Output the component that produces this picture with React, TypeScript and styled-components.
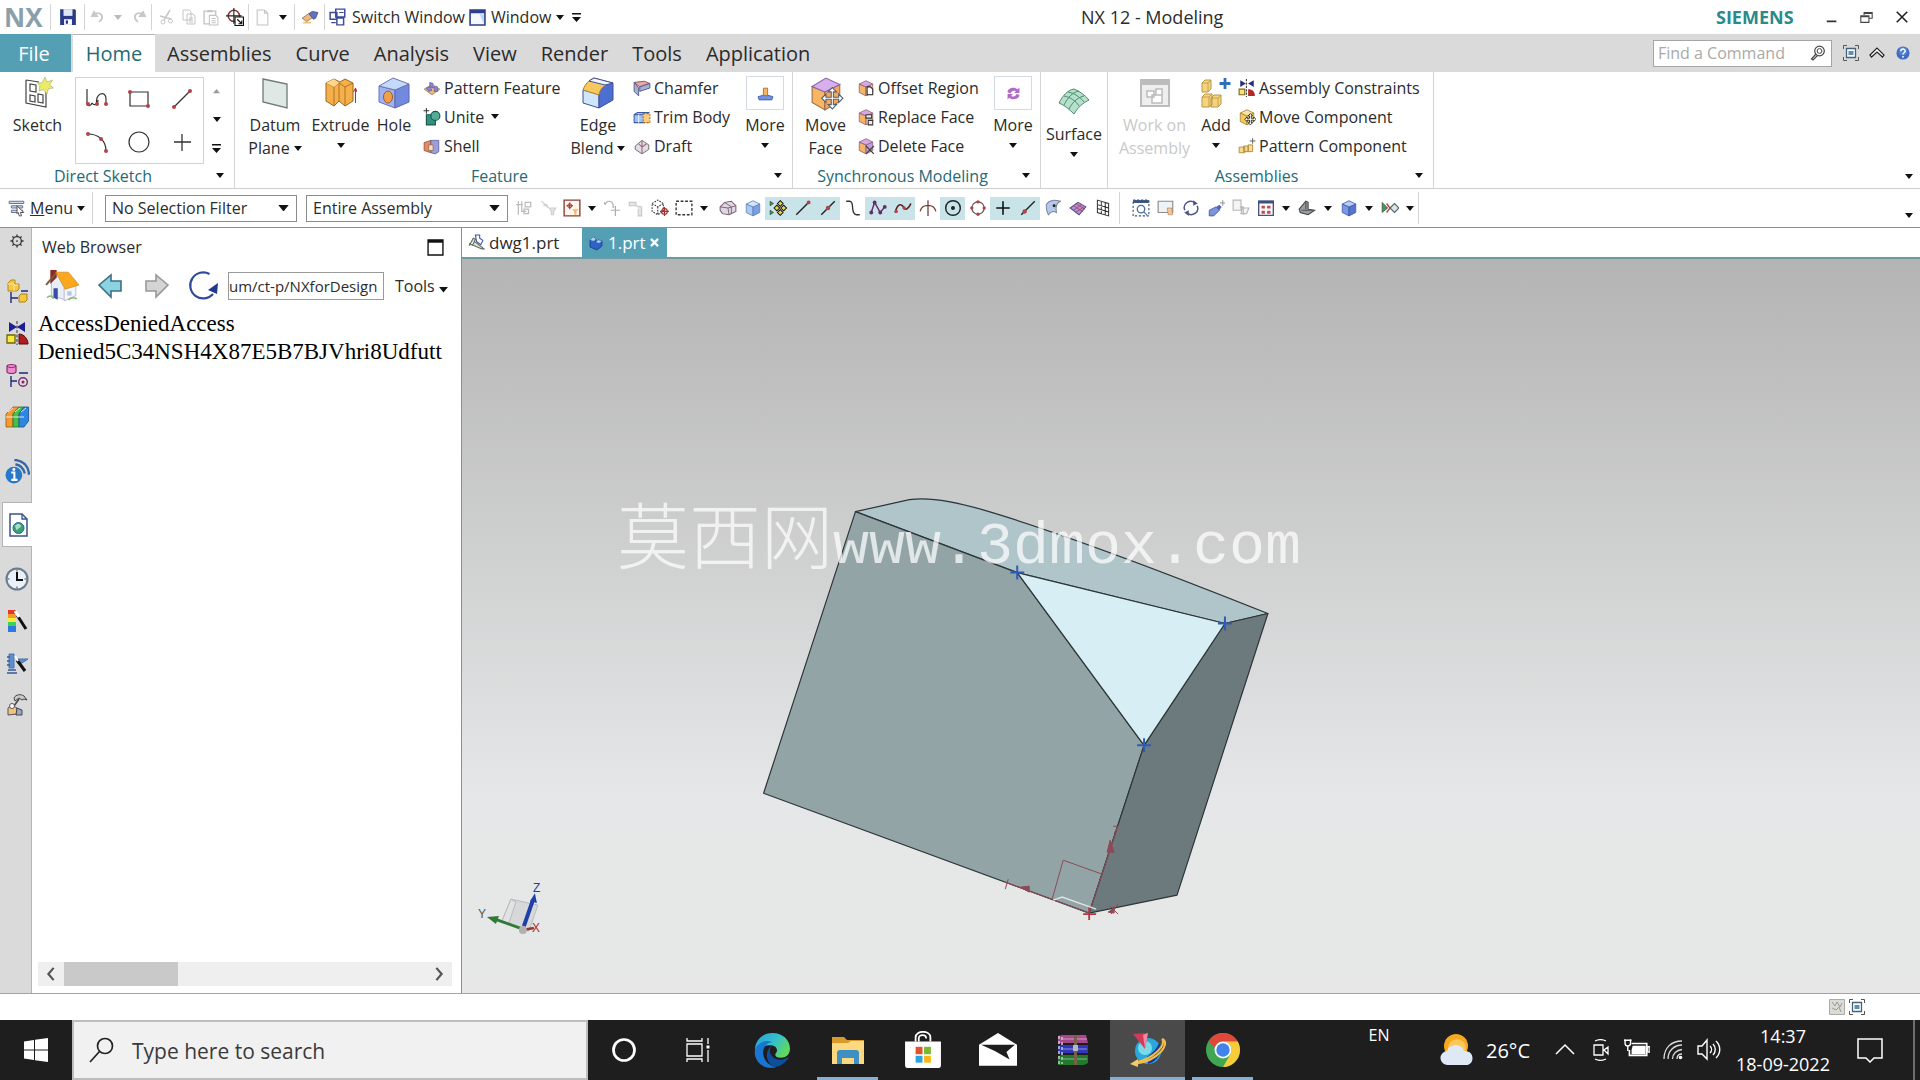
import React, { useEffect, useRef } from "react";
import styled, { createGlobalStyle, css } from "styled-components";

const C = {
  teal: "#559fb4",
  tealText: "#246a77",
  text: "#2b2b2b",
  bar: "#dadada",
  line: "#d4d4d4",
  hot: "#c9e4e8",
  task: "#1e1e1e",
};
const UI = `"Open Sans", "Noto Sans", sans-serif`;

const Global = createGlobalStyle`
  *, *::before, *::after { box-sizing: border-box; }
  html, body { margin: 0; height: 100%; }
  body { font-family: ${UI}; font-size: 16px; color: ${C.text}; background: #fff; overflow: hidden; }
  button, input, select { font: inherit; color: inherit; }
  h1, h2, p { margin: 0; font-weight: 400; }
  svg { display: block; flex: none; }
`;

const plain = css`
  border: 0;
  padding: 0;
  background: none;
  display: flex;
  align-items: center;
  justify-content: center;
  white-space: nowrap;
`;

/* ---------- shell ---------- */
const Shell = styled.div`
  height: 100vh;
  display: flex;
  flex-direction: column;
`;
const TitleBar = styled.header`
  flex: none;
  height: 34px;
  display: flex;
  align-items: center;
`;
const Brand = styled.span`
  width: 50px;
  padding-left: 4px;
  font-size: 26px;
  line-height: 34px;
  font-weight: 700;
  color: #8b9fab;
`;
const Quick = styled.div<{ $pad?: number }>`
  display: flex;
  align-items: center;
  height: 26px;
  padding: 0 ${(p) => p.$pad ?? 5}px;
  border-left: 1px solid ${C.line};
`;
const Cell = styled.button<{ $w?: number; $hot?: boolean }>`
  ${plain}
  width: ${(p) => p.$w ?? 23}px;
  height: 23px;
  flex: none;
  background: ${(p) => (p.$hot ? C.hot : "none")};
`;
const QuickText = styled.button`
  ${plain}
  gap: 5px;
  padding-left: 4px;
`;
const Title = styled.h1`
  flex: 1;
  text-align: center;
  font-size: 18px;
  line-height: 34px;
`;
const Siemens = styled.span`
  font-weight: 700;
  font-size: 18px;
  color: #2a8a8c;
  width: 98px;
`;

const TabBar = styled.nav`
  flex: none;
  height: 38px;
  display: flex;
  align-items: stretch;
  background: ${C.bar};
`;
const Tab = styled.button<{ $kind?: "file" | "on" }>`
  ${plain}
  font-size: 20px;
  padding: 0 12px;
  ${(p) => p.$kind === "file" && css`background: ${C.teal}; color: #fff; width: 71px; padding-right: 15px;`}
  ${(p) => p.$kind === "on" && css`background: #fff; color: ${C.tealText}; margin-left: 2px; width: 82px; border-top: 1px solid #b5b5b5;`}
`;
const TabTools = styled.div`
  display: flex;
  align-items: center;
  padding-right: 4px;
`;
const Spacer = styled.span`
  flex: 1;
`;
const Finder = styled.label`
  display: flex;
  align-items: center;
  align-self: center;
  width: 179px;
  height: 27px;
  padding: 0 5px 0 4px;
  margin-right: 6px;
  background: #fff;
  border: 1px solid #a5a5a5;
  input {
    flex: 1;
    min-width: 0;
    border: 0;
    padding: 0;
    outline: 0;
    background: none;
    &::placeholder { color: #a9a9a9; opacity: 1; }
  }
`;

/* ---------- ribbon ---------- */
const Ribbon = styled.section`
  flex: none;
  height: 117px;
  display: flex;
  border-bottom: 1px solid #cfcfcf;
`;
const GroupBox = styled.section<{ $w: number }>`
  width: ${(p) => p.$w}px;
  flex: none;
  display: flex;
  flex-direction: column;
  border-right: 1px solid ${C.line};
`;
const GroupBody = styled.div<{ $pad?: number }>`
  height: 92px;
  display: flex;
  padding-left: ${(p) => p.$pad ?? 3}px;
`;
const GroupFoot = styled.div`
  height: 24px;
  display: flex;
  h2 { flex: 1; text-align: center; font-size: 16px; line-height: 24px; color: ${C.tealText}; }
`;
const BigBtn = styled.button<{ $w: number; $drop?: number; $off?: boolean }>`
  ${plain}
  flex: none;
  flex-direction: column;
  justify-content: flex-start;
  width: ${(p) => p.$w}px;
  padding-top: ${(p) => 5 + (p.$drop ?? 0)}px;
  color: ${(p) => (p.$off ? "#c9c9c9" : C.text)};
`;
const BigIcon = styled.span<{ $box?: boolean }>`
  width: ${(p) => (p.$box ? 38 : 32)}px;
  height: ${(p) => (p.$box ? 34 : 32)}px;
  margin-bottom: ${(p) => (p.$box ? 4 : 5)}px;
  display: grid;
  place-items: center;
  border: ${(p) => (p.$box ? "1px solid #d5dbe6" : "0")};
`;
const BigLine = styled.span`
  height: 23px;
  line-height: 23px;
  display: flex;
  align-items: center;
  gap: 4px;
`;
const ArrowLine = styled.span`
  height: 16px;
  display: flex;
  align-items: center;
`;
const SmallCol = styled.div<{ $w?: number }>`
  width: ${(p) => (p.$w ? p.$w + "px" : "auto")};
  padding: 1px 0 0 4px;
`;
const SmallBtn = styled.button`
  ${plain}
  height: 29px;
  gap: 3px;
`;
const Gallery = styled.div`
  width: 129px;
  height: 87px;
  margin-top: 5px;
  display: grid;
  grid-template-columns: repeat(3, 1fr);
  border: 1px solid #cfd2d6;
`;
const GalleryCell = styled.button`
  ${plain}
`;
const GalleryNav = styled.div`
  width: 25px;
  padding-top: 5px;
  display: grid;
`;
const RibbonEnd = styled.div`
  margin-left: auto;
  align-self: flex-end;
`;

/* ---------- selection bar ---------- */
const SelBar = styled.section`
  flex: none;
  height: 39px;
  display: flex;
  align-items: center;
  border-bottom: 1px solid #8e8e8e;
`;
const MenuBtn = styled.button`
  ${plain}
  width: 93px;
  height: 32px;
  padding-right: 7px;
  gap: 4px;
  justify-content: flex-end;
  border-right: 1px solid ${C.line};
`;
const Combo = styled.label<{ $w: number; $gap: number }>`
  width: ${(p) => p.$w}px;
  height: 27px;
  margin-left: ${(p) => p.$gap}px;
  padding: 0 7px 0 6px;
  display: flex;
  align-items: center;
  border: 1px solid #8c8c8c;
  select {
    flex: 1;
    min-width: 0;
    appearance: none;
    border: 0;
    padding: 0;
    background: none;
    outline: 0;
  }
`;
const Tools = styled.div<{ $gap: number; $bar?: boolean }>`
  display: flex;
  align-items: center;
  height: 32px;
  margin-left: ${(p) => p.$gap}px;
  border-right: ${(p) => (p.$bar ? `1px solid ${C.line}` : "0")};
`;

/* ---------- body ---------- */
const Body = styled.main`
  flex: 1;
  min-height: 0;
  display: flex;
  border-bottom: 1px solid #a3a3a3;
`;
const Rail = styled.nav`
  flex: none;
  width: 32px;
  display: flex;
  flex-direction: column;
  background: ${C.bar};
  border-right: 1px solid #b4b4b4;
`;
const RailBtn = styled.button<{ $h?: number; $gap?: number; $on?: boolean }>`
  ${plain}
  flex: none;
  height: ${(p) => p.$h ?? 42}px;
  margin: ${(p) => p.$gap ?? 0}px -1px 0 ${(p) => (p.$on ? 2 : 0)}px;
  padding-left: ${(p) => (p.$on ? 0 : 2)}px;
  ${(p) => p.$on && css`background: #fff; border: 1px solid #b4b4b4; border-right: 0;`}
`;
const Panel = styled.aside`
  flex: none;
  width: 430px;
  display: flex;
  flex-direction: column;
  padding: 0 9px 7px 6px;
  border-right: 1px solid #8e8e8e;
`;
const PanelHead = styled.div`
  height: 38px;
  display: flex;
  align-items: center;
  justify-content: space-between;
  padding: 0 8px 0 4px;
  h2 { font-size: 16px; }
`;
const NavRow = styled.div`
  height: 40px;
  display: flex;
  align-items: center;
`;
const Url = styled.input`
  width: 156px;
  height: 28px;
  margin: 0 11px 0 2px;
  padding: 0 6px 0 0;
  font-size: 15px;
  border: 1px solid #9a9a9a;
  outline: 0;
`;
const LinkBtn = styled.button`
  ${plain}
  gap: 4px;
  svg { margin-top: 8px; }
`;
const Web = styled.div`
  flex: 1;
  overflow: hidden;
  padding-top: 4px;
  font-family: "Liberation Serif", serif;
  font-size: 23px;
  line-height: 28px;
  color: #000;
`;
const Scroll = styled.div`
  height: 24px;
  display: flex;
  background: #efefef;
`;
const Thumb = styled.div`
  width: 114px;
  background: #c9c9c9;
`;
const Stage = styled.section`
  flex: 1;
  min-width: 0;
  display: flex;
  flex-direction: column;
`;
const FileTabs = styled.div`
  flex: none;
  height: 31px;
  display: flex;
  border-bottom: 2px solid #6b9aa5;
`;
const FileTab = styled.button<{ $on?: boolean }>`
  ${plain}
  gap: 4px;
  padding: 0 6px;
  width: ${(p) => (p.$on ? 85 : 120)}px;
  font-size: 17px;
  justify-content: flex-start;
  background: ${(p) => (p.$on ? C.teal : "#fff")};
  color: ${(p) => (p.$on ? "#fff" : C.text)};
`;
const Canvas = styled.div`
  flex: 1;
  min-height: 0;
  position: relative;
  background: linear-gradient(#b4b4b4, #e6e7e8 74%, #e7e7e7);
  > svg { width: 100%; height: 100%; }
`;
const Watermark = styled.p`
  position: absolute;
  left: 155px;
  top: 31%;
  height: 90px;
  display: flex;
  align-items: baseline;
  white-space: nowrap;
  color: rgba(255, 255, 255, 0.72);
  font: 300 72px/90px "Noto Sans CJK SC", sans-serif;
  span { font: 400 60px/90px "Liberation Mono", monospace; }
`;
const Status = styled.footer`
  flex: none;
  height: 26px;
  display: flex;
  justify-content: flex-end;
  align-items: center;
  gap: 4px;
  padding-right: 55px;
`;

/* ---------- taskbar ---------- */
const TaskBar = styled.footer`
  flex: none;
  height: 60px;
  display: flex;
  background: ${C.task};
  color: #fff;
`;
const TaskBtn = styled.button<{ $w?: number; $on?: boolean }>`
  ${plain}
  flex: none;
  width: ${(p) => p.$w ?? 75}px;
  background: ${(p) => (p.$on ? "#4a4a4a" : "none")};
`;
const Running = styled.span<{ $wide?: boolean }>`
  display: flex;
  width: ${(p) => (p.$wide ? 75 : 61)}px;
  height: 60px;
  padding-top: 3px;
  align-items: center;
  justify-content: center;
  border-bottom: 3px solid #84b0d8;
`;
const SearchBox = styled.label`
  flex: none;
  width: 516px;
  display: flex;
  align-items: center;
  gap: 17px;
  padding-left: 15px;
  background: #f1f1f1;
  border: 2px solid #bdbdbd;
  input {
    flex: 1;
    border: 0;
    padding: 2px 0 0;
    background: none;
    outline: 0;
    font-size: 21px;
    &::placeholder { color: #3a3a3a; opacity: 1; }
  }
`;
const Tray = styled.div`
  margin-left: auto;
  display: flex;
  align-items: center;
`;
const TrayBtn = styled.button<{ $w: number }>`
  ${plain}
  width: ${(p) => p.$w}px;
  height: 60px;
`;
const Lang = styled.button`
  ${plain}
  font-size: 16px;
  width: 56px;
  height: 30px;
  align-self: flex-start;
`;
const Weather = styled.button`
  ${plain}
  gap: 12px;
  font-size: 20px;
  margin-left: 16px;
  width: 124px;
`;
const Clock = styled.button`
  ${plain}
  flex-direction: column;
  width: 112px;
  font-size: 18px;
  line-height: 28px;
`;
const Peek = styled.span`
  width: 7px;
  height: 60px;
  margin-left: 12px;
  border-left: 2px solid #6d6d6d;
`;

/* ---------- icons ---------- */
type IP = { s?: number; v?: number; children?: React.ReactNode };
const I = ({ s = 18, v = 16, children }: IP) => (
  <svg width={s} height={s} viewBox={`0 0 ${v} ${v}`} fill="none" aria-hidden="true">{children}</svg>
);
const Down = ({ c = "#111", w = 8 }: { c?: string; w?: number }) => (
  <svg width={w} height={w / 2 + 1} viewBox="0 0 8 5" aria-hidden="true"><path d="M0 0h8L4 5z" fill={c} /></svg>
);
const More = () => (
  <svg width="9" height="9" viewBox="0 0 9 9" aria-hidden="true"><path d="M0 0h9v1.4H0zM0 4h9L4.500 9z" fill="#111" /></svg>
);
const cube = (a: string, b: string, c: string, st = "#555") => (
  <g stroke={st} strokeWidth=".7" strokeLinejoin="round">
    <path d="M2 4.500 8 7v8L2 12z" fill={b} /><path d="M14 4.500 8 7v8l6-3z" fill={c} /><path d="M2 4.500 8 1.500l6 3L8 7z" fill={a} />
  </g>
);
const dot = (x: number, y: number, r = 1.5, c = "#b0444a") => <circle cx={x} cy={y} r={r} fill={c} />;

const ic: Record<string, React.ReactNode> = {
  save: <I><path d="M1 1h13l1 1v13H1z" fill="#2b3a86" /><path d="M4 1h8v6H4z" fill="#dfe6f5" /><path d="M4.500 10h7v5h-7z" fill="#fff" /><path d="M6 11h2v3H6z" fill="#2b3a86" /></I>,
  undo: <I s={16}><path d="M2 7h5L4 3zM4 6c4-4 9-1 8 3-.4 2-2 3-3 4" stroke="#c8c8c8" strokeWidth="1.800" /></I>,
  redo: <I s={16}><path d="M14 7H9l3-4zM12 6C8 2 3 5 4 9c.4 2 2 3 3 4" stroke="#c8c8c8" strokeWidth="1.800" /></I>,
  cut: <I s={16}><path d="M12 1 6 11M2 7l11 3" stroke="#c8c8c8" strokeWidth="1.500" /><circle cx="5" cy="13" r="2" stroke="#c8c8c8" /><circle cx="12.500" cy="12" r="2" stroke="#c8c8c8" /></I>,
  copy: <I s={16}><path d="M2 1h6l2 2v8H2zM6 5h6l2 2v8H6z" fill="#fff" stroke="#c4c4c4" /><path d="M8 9h4M8 11h4M8 13h4" stroke="#c4c4c4" /></I>,
  paste: <I s={17}><path d="M1 2h11v12H1z" stroke="#c4c4c4" strokeWidth="1.300" /><path d="M4 1h5v2H4z" fill="#c4c4c4" /><path d="M6 6h6l2 2v7H6z" fill="#fff" stroke="#c4c4c4" /><path d="M8 9h4M8 11h4M8 13h4" stroke="#c4c4c4" /></I>,
  target: <I><circle cx="7" cy="7" r="5" stroke="#7c3030" strokeWidth="1.300" /><path d="M7 0v14M0 7h14" stroke="#222" /><path d="M8 8h7.500v7.500H8z" fill="#fff" stroke="#111" /><path d="m10 10 4 4m0-3v3h-3" stroke="#111" /></I>,
  page: <I s={17}><path d="M3 1h7l3 3v11H3z" fill="#fdfdfd" stroke="#c2c2c2" /><path d="M10 1v3h3" stroke="#c2c2c2" /></I>,
  eraser: <I><path d="m1 9 6-4 4 3-6 4z" fill="#f0b880" stroke="#8a6a4a" strokeWidth=".7" /><path d="m7 5 3-2 5 1-2 5-2 1z" fill="#6672b8" stroke="#3c4688" strokeWidth=".7" /><path d="m2 13 7 0" stroke="#e0c27c" strokeWidth="1.500" /></I>,
  switch: <I><path d="M6 1h8v7H6zM1 4h6v6H1zM7 9h6v6H7z" stroke="#3c4a98" strokeWidth="1.300" fill="#fff" /><path d="M2 13h4M9 4h4" stroke="#3c4a98" /></I>,
  window: <I s={17}><path d="M1 1h14v14H1z" fill="#f4f9ff" stroke="#2d3f8c" strokeWidth="1.500" /><path d="M1 1h14v3H1z" fill="#2d3f8c" /><path d="M10 5h4v9z" fill="#b8d8f4" /></I>,
  min: <I s={14}><path d="M2 13h11" stroke="#333" strokeWidth="2" /></I>,
  restore: <I s={13}><path d="M5 5V2h10v7h-4M1 6h10v8H1z" stroke="#444" strokeWidth="1.300" /><path d="M1 7h10M5 3h10" stroke="#444" strokeWidth="1.500" /></I>,
  close: <I s={14}><path d="m2 2 12 12M14 2 2 14" stroke="#222" strokeWidth="1.800" /></I>,
  find: <I s={16}><circle cx="9.500" cy="6" r="4.800" stroke="#444" strokeWidth="1.200" /><circle cx="9.500" cy="6" r="2.400" stroke="#444" /><path d="m6 9-4.500 5 1.500 1 4.500-4.500" stroke="#444" strokeWidth="1.200" /></I>,
  full: <I s={16}><path d="M.5 4V.5H4M12 .5h3.500V4M15.500 12v3.500H12M4 15.500H.5V12" stroke="#555" /><path d="M3.500 3.500h9v9h-9z" fill="#fff" stroke="#44627c" strokeWidth="1.300" /><path d="M5.500 6h5v4h-5z" fill="#5b8fb5" /></I>,
  up: <I s={16}><path d="m1 10 7-7 7 7-1.500 2L8 7 2.500 12z" stroke="#222" strokeWidth="1.200" fill="#fff" /></I>,
  help: <I s={14}><circle cx="8" cy="8" r="7.500" fill="#3e6cc0" /><circle cx="8" cy="6" r="5" fill="#6f98dc" opacity=".5" /><path d="M5.500 6c0-3.400 5-3.200 5-.3 0 2-2.500 2-2.500 4" stroke="#fff" strokeWidth="1.700" /><circle cx="8" cy="12.400" r="1.100" fill="#fff" /></I>,

  sketch: <I s={32} v={32}><path d="M4 3v23l20 4V13M4 3l13 2" stroke="#444" strokeWidth="1.200" /><path d="M8 7v7l6 1V8zM8 18v6l5 1v-6zM16 17v8l5 1v-8z" stroke="#444" strokeWidth="1.200" /><path d="m23 0 2 5 5.500-2-3 5 4 3-5 .5L25 17l-3.500-4.500L17 14l1-5-3-3.500 5 .5z" fill="#ecec6a" stroke="#a5a95c" strokeWidth=".6" /></I>,
  profile: <I s={24} v={24}><path d="M2 2v14c1 4 4 3 5 0M12 17c-3-10 9-15 9-5v5M7 16c2 3 6 2 6-3" stroke="#333" strokeWidth="1.200" />{dot(3, 17, 2)}{dot(12, 17, 2)}{dot(21, 17, 2)}</I>,
  rect: <I s={24} v={24}><path d="M3 5h18v14H3z" stroke="#333" strokeWidth="1.200" />{dot(3, 5, 2)}{dot(21, 19, 2)}</I>,
  line: <I s={24} v={24}><path d="M4 20 20 4" stroke="#333" strokeWidth="1.200" />{dot(4, 20, 2)}{dot(20, 4, 2)}</I>,
  arc: <I s={24} v={24}><path d="M3 4c10 0 18 6 18 17" stroke="#333" strokeWidth="1.200" />{dot(3, 4, 2)}{dot(16, 9, 2)}{dot(21, 21, 2)}</I>,
  circle: <I s={24} v={24}><circle cx="12" cy="12" r="10" stroke="#333" strokeWidth="1.200" /></I>,
  plus: <I s={24} v={24}><path d="M12 4v17M4 12h17" stroke="#333" strokeWidth="1.300" /></I>,
  datum: <I s={32} v={32}><path d="m4 2 24 5v24L4 25z" fill="#dfe8e5" stroke="#6d7a78" strokeWidth="1.300" /></I>,
  extrude: <I s={32} v={32}><path d="m1 6 8-4 6 3 5-3 8 4v18l-8 5-6-5-5 5-8-5z" fill="#f5b04a" stroke="#9a661e" /><path d="m1 6 8 4 5-4 6 4 8-4M9 10v19M14 6v18M20 10v19" stroke="#9a661e" strokeWidth=".8" /><path d="m1 6 8-4 5 4-5 4z" fill="#ffd68a" /><path d="M30.500 12v14m-2-11 2-4 1.500 4" stroke="#a33" /></I>,
  hole: <I s={32} v={32}><path d="M1 9v16l16 6V13z" fill="#9db2f2" stroke="#6a74b4" /><path d="m31 7-14 6v18l14-6z" fill="#7289e0" stroke="#5a66a8" /><path d="m1 9 14-8 16 6-14 6z" fill="#c3dafa" stroke="#6a74b4" /><ellipse cx="10" cy="20" rx="4.500" ry="6" fill="#f0a04a" stroke="#a05a2a" /></I>,
  pattern: <I><path d="m1 9 5-3 9 3-7 5z" fill="#f0b878" stroke="#9a7a50" strokeWidth=".7" /><path d="m6 3 3 1v4l-3-1zM3 8l3-1 2 3-3 1zM10 6l3 1v4h-3z" fill="#8b86cf" stroke="#5c5796" strokeWidth=".6" /></I>,
  unite: <I><path d="M3 6h8v9H3z" fill="#34917e" stroke="#17594c" /><circle cx="11" cy="7" r="4" fill="#54ab98" stroke="#17594c" /><path d="M3 0v5M.5 2.500h5" stroke="#333" strokeWidth=".9" /></I>,
  shell: <I><path d="m1 5 6-2v11l-6-2z" fill="#e88a5a" stroke="#8a4a3a" strokeWidth=".7" /><path d="M7 3h7v10l-3 2-4-1z" fill="#9a9fdc" stroke="#565c9c" strokeWidth=".7" /><path d="M5 7h4v5H5z" fill="#f7ddc4" stroke="#8a5a4a" strokeWidth=".6" /></I>,
  edge: <I s={32} v={32}><path d="M1 13v13l16 5V17z" fill="#cfe5f8" stroke="#3d4ea0" /><path d="M31 6c-8 1-13 5-14 11v14l14-8z" fill="#4c6fd0" stroke="#3d4ea0" /><path d="M1 13C3 7 7 3 12 1l19 5c-8 1-13 5-14 12z" fill="#f8c860" stroke="#a8802c" /><path d="m12 1 19 5-8 2L7 4z" fill="#f2f6ff" stroke="#3d4ea0" /></I>,
  chamfer: <I><path d="m1 3 9-1 5 2-9 3z" fill="#e9a6a6" stroke="#874c54" strokeWidth=".8" /><path d="M1 3v8l4 4V8zM6 7l9-3v4l-9 3z" fill="#a8b0d0" stroke="#4d5688" strokeWidth=".8" /></I>,
  trim: <I><path d="M1 6h9v7H1zM1 6l3-2h10l-2 2" fill="#9cc3f2" stroke="#3a5aa2" strokeWidth=".9" /><path d="M9 5h6v8H9z" fill="#fbcf7a" stroke="#b5661f" strokeWidth=".9" strokeDasharray="2 1" /><path d="M5 6v7" stroke="#e8f0ff" /></I>,
  draft: <I><path d="m2 8 6-5 6 4v4l-6 4-6-4z" fill="#dcdfe8" stroke="#666" strokeWidth=".8" /><path d="M8 3v12M5 6l3 3 4-3" stroke="#a8596a" strokeWidth=".9" /></I>,
  moreF: <I s={17}><path d="m1 11 7-2 7 2-1 3H2z" fill="#6e92e4" stroke="#3c58a8" strokeWidth=".8" /><path d="M6 3h4v7H6z" fill="#f5b665" stroke="#a46c25" strokeWidth=".8" /></I>,
  moreS: <I s={19}><path d="M3 7c0-4 6-5 8.500-2.500L13 3v4.500H8.500L10 6C8 5 6 6 5.500 8zM13 9c0 4-6 5-8.500 2.500L3 13V8.500h4.500L6 10c2 1.200 4 .5 4.500-1.500z" fill="#b06cc4" /></I>,
  moveFace: <I s={34} v={32}><path d="M2 9v15l12 7V14z" fill="#f8b660" stroke="#9a6a4a" /><path d="m28 7-14 7v17l14-8z" fill="#f5a75e" stroke="#9a6a4a" /><path d="m2 9 13-8 13 6-14 7z" fill="#d9aeec" stroke="#8a66aa" /><path d="m21 10 4 4h-3v5h5v-3l4 4-4 4v-3h-5v5h3l-4 4-4-4h3v-5h-5v3l-4-4 4-4v3h5v-5h-3z" fill="#fff" stroke="#4f6276" /></I>,
  offset: <I>{cube("#d7a8e8", "#f5b468", "#f8cf98", "#8a6072")}<path d="M9 7h3l2 2v5H9z" fill="#fff" stroke="#222" strokeWidth=".9" /></I>,
  replace: <I>{cube("#d7a8e8", "#f5b468", "#f8cf98", "#8a6072")}<path d="M8 6h5v3H8zM10 11h4v4h-4z" fill="#eee" stroke="#333" strokeWidth=".9" /></I>,
  del: <I>{cube("#d7a8e8", "#f5b468", "#c79ce0", "#8a6072")}<path d="m8 8 7 7m0-7-7 7" stroke="#444" strokeWidth="1.200" /></I>,
  surface: <I s={32} v={32}><path d="M1 17C5 9 10 4 16 3c5 2 11 6 15 11-6 3-11 7-15 14C11 23 6 19 1 17z" fill="#b5e0ca" stroke="#4f8a72" /><path d="M6 19c4-8 9-13 15-14M11 23c4-8 10-12 15-13M6 10c6 1 12 5 15 10M10 6c6 1 12 5 16 10" stroke="#4f8a72" /></I>,
  work: <I s={32} v={32}><path d="M2 3h28v26H2z" fill="#eee" stroke="#bcbcbc" strokeWidth="2" /><path d="M2 3h28v5H2z" fill="#bcbcbc" /><path d="M8 14h7v6H8zM13 18h10v8H13zM17 12h6v6h-6z" fill="#fff" stroke="#bcbcbc" strokeWidth="1.500" /></I>,
  add: <I s={32} v={32}><path d="m2 6 3-3h6v9l-3 3H2zM2 20l3-3h7v11l-3 2H2zM11 21l3-3h7v9l-3 3h-7z" fill="#f6d47c" stroke="#b8964a" /><path d="M2 6h6v8M8 6l3-3M2 20h7v10M9 20l3-3M11 21h7v8m0-8 3-3" stroke="#b8964a" strokeWidth=".8" /><path d="M25 1v11M19.500 6.500h11" stroke="#2c70b8" strokeWidth="2.800" /></I>,
  constr: <I><path d="m2 1 5 3-5 3zM14 1 9 4l5 3z" fill="#2d2d80" /><path d="M1 9h5v5H1z" fill="#f5e27a" stroke="#7a6a20" /><path d="M9 9v6h6c0-4-2-6-6-6z" fill="#b02a2a" /><path d="M7.500 0v16" stroke="#444" strokeDasharray="2 1" /></I>,
  moveC: <I>{cube("#fae3a0", "#f4c95c", "#f6d47c", "#a08030")}<path d="m11 5 2 2h-1.200v2.200H14V8l2 2-2 2v-1.200h-2.200V13H13l-2 2-2-2h1.200v-2.200H8V12l-2-2 2-2v1.200h2.200V7H9z" stroke="#111" strokeWidth=".7" fill="#fff" /></I>,
  patC: <I><path d="M1 9h5v5H1zM5 8h4v5H5zM9 7h4v6H9z" fill="#f8dc92" stroke="#b08a35" strokeWidth=".8" /><path d="M13 1v5M10.500 3.500h5" stroke="#555" strokeWidth=".8" /></I>,

  menu: <I><path d="M1 2h13v2H1zM3 6h10v2H3zM3 10h10v2H3z" fill="#cfd8ee" stroke="#5b678c" strokeWidth=".8" /><path d="m8 6 6 6-3 0 1 3-2 0-1-3-1 1z" fill="#fff" stroke="#444" strokeWidth=".8" /></I>,
  g1: <I><path d="M3 2v12M1 5h6M6 2v9h4M9 3h5v4H9zM8 9h4v4H8z" stroke="#bcbcbc" strokeWidth="1.100" /></I>,
  g2: <I><path d="m2 2 5 4M4 6c2-3 4 0 4 2M9 8h6l-2 3v3h-2v-3z" stroke="#d0d0d0" fill="#e2e2e2" /></I>,
  filt: <I><path d="M1 1h14v14H1z" fill="#fff6ee" stroke="#8c3a34" strokeWidth="1.200" /><path d="M6 3v6M3 6h6" stroke="#a3302a" /><circle cx="6" cy="6" r="1.800" stroke="#a3302a" strokeWidth=".8" /><path d="M8 9h6l-2 2v3h-2v-3z" fill="#f2b968" /></I>,
  g3: <I><path d="M2 5c1-4 6-4 7 0v3M2 5l-1-2M11 6v9M7 10h8" stroke="#adadad" strokeWidth="1.100" /></I>,
  g4: <I><path d="M2 3h6v3H2zM8 6l5 1v8h-3V9" stroke="#c8c8c8" fill="#e6e6e6" /></I>,
  dotcube: <I><path d="m1 4 5-3 5 3v7l-5 3-5-3zM1 4l5 3 5-3M6 7v7" stroke="#444" strokeDasharray="1.500 1" /><circle cx="12" cy="11" r="2.500" stroke="#a3302a" /><path d="M12 7v8M8 11h8" stroke="#a3302a" /></I>,
  marquee: <I><path d="M1 2h14v12H1z" stroke="#333" strokeDasharray="2.500 1.500" strokeWidth="1.200" /></I>,
  meshcube: <I><path d="m1 7 4-4 6-1 4 4v5l-6 3-6-1-2-3z" fill="#dcd8e4" stroke="#7d5a70" strokeWidth=".9" /><path d="M1 7l7 1 7-2M8 8l1 6M5 3l6 4v6" stroke="#7d5a70" strokeWidth=".8" /></I>,
  solid: <I>{cube("#d2e6fa", "#a9caf3", "#7ba0e2", "#5d7cb8")}</I>,
  snap: <I><path d="m1 2 3 2-3 2zM1 10l3 2-3 2z" fill="#39a05a" stroke="#222" strokeWidth=".5" />{[[10, 4], [7, 8], [13, 8], [10, 12]].map(([x, y]) => <path key={`${x}${y}`} d={`M${x} ${y - 2.5}l2.500 2.500-2.500 2.500-2.500-2.500z`} fill="#f0d24a" stroke="#111" strokeWidth=".9" />)}</I>,
  end: <I><path d="M2 14 14 2" stroke="#222" strokeWidth="1.200" />{dot(13, 3, 1.7)}</I>,
  mid: <I><path d="M2 14 14 2" stroke="#222" strokeWidth="1.200" />{dot(8, 8, 2)}</I>,
  onCurve: <I><path d="M2 14 14 2" stroke="#222" strokeWidth="1.200" />{dot(5, 11, 2)}</I>,
  curve: <I><path d="M2 2h3c5 0 0 11 6 12h3" stroke="#333" strokeWidth="1.200" /></I>,
  pole: <I><path d="m2 12 3-9 5 9 4-5" stroke="#642a6a" strokeWidth="1.300" />{dot(2, 12, 1.7, "#642a6a")}{dot(5, 3, 1.7, "#642a6a")}{dot(10, 12, 1.7, "#642a6a")}{dot(14, 7, 1.7, "#642a6a")}</I>,
  spline: <I><path d="M1 12C4 1 8 6 9 8s4 1 6-4" stroke="#5a2028" strokeWidth="1.500" />{dot(2, 11)}{dot(9, 8)}</I>,
  inter: <I><path d="M8 1v14M1 11c2-7 12-7 14 0" stroke="#743838" strokeWidth="1.100" /></I>,
  center: <I><circle cx="8" cy="8" r="6.500" stroke="#222" strokeWidth="1.300" />{dot(8, 8, 1.8, "#222")}</I>,
  quad: <I><circle cx="8" cy="8" r="5.500" stroke="#555" />{dot(8, 2.5)}{dot(8, 13.5)}{dot(2.5, 8)}{dot(13.5, 8)}</I>,
  cross: <I><path d="M8 2v12M2 8h12" stroke="#111" strokeWidth="1.400" /></I>,
  face: <I><path d="M2 5c3-5 8-4 13-3-4 1-5 4-4 10-3-2-5-1-7 2-2-3-2-6-2-9z" fill="#b4c8ea" stroke="#7985a0" strokeWidth=".9" />{dot(9, 6, 1.3, "#222")}</I>,
  grid1: <I><path d="m1 8 7-5 7 4-6 7z" fill="#a896d8" stroke="#5c4a96" strokeWidth=".9" /><path d="m4 6 8 5M6 4l8 5M4 10l7-5M6 12l7-5" stroke="#b03a4a" strokeWidth=".7" /></I>,
  grid2: <I><path d="m3 1 10 3v11L3 12zM3 5l10 3M3 8.500l10 3M6.500 2v11M10 3v11" stroke="#333" strokeWidth=".9" /></I>,
  fit: <I><path d="M1 1h14v14H1z" stroke="#44547e" strokeDasharray="2 1.500" /><path d="M1 1h14v2.500H1z" fill="#34507e" /><circle cx="8" cy="9" r="3.300" stroke="#4c6f9e" strokeWidth="1.200" /><path d="m10.500 11.500 3 3" stroke="#4c6f9e" /></I>,
  zoomw: <I><path d="M1 2h13v10H1z" stroke="#888" fill="#eef3f7" /><path d="M9 8h4l1 6h-4z" fill="#f4c49a" stroke="#b38660" strokeWidth=".6" /></I>,
  rotate: <I><path d="M2.500 10C0 4 7 0 11.500 3.500M13.500 6C16 12 9 16 4.500 12.500" stroke="#4e5684" strokeWidth="1.300" /><path d="m10 1 4 3-4 2zM6 15l-4-3 4-2z" fill="#4e5684" /></I>,
  paint: <I><path d="m2 10 6-3 3 3-5 5H2z" fill="#7d94da" stroke="#4d5aa0" strokeWidth=".8" /><path d="m8 7 3-2 2 2-2 3z" fill="#5a62c0" /><path d="M14 1v5M11.500 3.500h5" stroke="#888" strokeWidth=".8" /></I>,
  pages: <I><path d="M1 1h7v9H1zM7 7h3v7M9 8h6l-2 5H8z" stroke="#b7b7b7" fill="#f4f4f4" /></I>,
  layout: <I><path d="M1.500 2h13v12.500h-13z" fill="#fff" stroke="#4b4f80" strokeWidth="1.200" /><path d="M1 1.500h14V4H1z" fill="#3b4f80" /><path d="M4 6h3v2.500H4zM9 6h3v2.500H9zM4 10.500h3V13H4zM9 10.500h3V13H9z" fill="#c84848" /></I>,
  shade: <I><path d="m1 9 6-7 2 1v6l6 1-6 4-7-2z" fill="#9a9da0" stroke="#3d4144" strokeWidth=".9" /><path d="m3 10 10 0M7 3v6" stroke="#555" /></I>,
  bluecube: <I>{cube("#b4cdf8", "#7699e8", "#5474cf", "#3c55a0")}</I>,
  clip: <I><path d="m1 3 5 5-5 4z" fill="#3f9a55" stroke="#444" strokeWidth=".6" /><path d="m5 4 3 4-3 4" stroke="#c23b3b" strokeWidth="1.200" /><path d="m8 8 4-4 4 4-4 4z" fill="#dce3ea" stroke="#566" /></I>,

  gear: <I s={14}><circle cx="8" cy="8" r="5" stroke="#333" strokeWidth="1.500" />{dot(8, 8, 1, "#333")}<path d="M8 .5v2.500M8 13v2.500M.5 8H3M13 8h2.500M2.700 2.700l1.700 1.700M11.600 11.600l1.700 1.700M13.300 2.700l-1.700 1.700M4.400 11.600l-1.700 1.700" stroke="#333" strokeWidth="1.500" /></I>,
  asmNav: <I s={24} v={24}><path d="m3 4 3-3h4v4h4v5l-2 2H3z" fill="#f7c73c" stroke="#b08a2c" /><path d="M3 5h6v7M9 6h4" stroke="#fbe8a0" /><path d="M16 12h7M6 13v11M6 19h7" stroke="#1e2a7c" strokeWidth="1.400" /><path d="m14 17 2-2h6v6l-2 2h-6z" fill="#f7c73c" stroke="#a8811c" /></I>,
  conNav: <I s={24} v={24}><path d="m4 1 8 5-8 5zM20 1l-8 5 8 5z" fill="#1e1e96" /><path d="M2 14h8v8H2z" fill="#f8ea3a" stroke="#6d6412" strokeWidth="1.300" /><path d="M14 13v10h9c0-5-4-10-9-10z" fill="#b21d1d" stroke="#4a0f0f" /><path d="M12 0v24" stroke="#333" strokeDasharray="3 1.500" /></I>,
  partNav: <I s={24} v={24}><path d="M2 3c1-2 8-2 9 0v6c-1 2-8 2-9 0z" fill="#ee8cd0" stroke="#8c2a6a" strokeWidth="1.200" /><path d="M2 3c1 2 8 2 9 0" stroke="#8c2a6a" /><path d="M14 10h9M6 13v11M6 18h6" stroke="#1e2a7c" strokeWidth="1.400" /><circle cx="18" cy="19" r="4.300" stroke="#7c2a6a" strokeWidth="1.400" />{dot(18, 19, 1.5, "#7c2a6a")}</I>,
  books: <I s={24} v={24}><path d="m1 9 7-7h6l-6 7v13H1z" fill="#f49a30" stroke="#9a5a14" strokeWidth=".8" /><path d="m8 9 6-7h5l-5 7v13H8z" fill="#42c04a" stroke="#1f7a2a" strokeWidth=".8" /><path d="m14 9 5-7h4.500v14L19 22h-5z" fill="#2f86e0" stroke="#1a4c96" strokeWidth=".8" /><path d="m3 7 5-4M10 7l5-4M16 7l5-4M1 12h18" stroke="#fff" opacity=".8" /></I>,
  info: <I s={25} v={24}><circle cx="8.500" cy="15.500" r="8" fill="#2878c8" /><path d="M6 13h3v7M6 20h6" stroke="#fff" strokeWidth="2" />{dot(8.5, 10, 1.4, "#fff")}<path d="M9 1c8 0 14 6 14 14M10 5c5 1 8 4 9 9" stroke="#3368a8" strokeWidth="2.300" /></I>,
  web: <I s={24} v={24}><path d="M4 1h12l5 5v17H4z" fill="#fff" stroke="#3a5488" strokeWidth="1.500" /><path d="M16 1v5h5" stroke="#3a5488" strokeWidth="1.300" /><circle cx="12.500" cy="15" r="5.500" fill="#3aa07a" stroke="#286a88" /><path d="M9 13c2-3 6-2 6 0s-4 2-4 5" fill="#a6e0c8" /></I>,
  history: <I s={24} v={24}><circle cx="12" cy="12" r="10.500" fill="#e9f0f8" stroke="#6b7a8c" strokeWidth="2" /><path d="M12 5v8h6" stroke="#111" strokeWidth="2" /><path d="M12 2.500v2M12 19.500v2M2.500 12h2M19.500 12h2" stroke="#444" /></I>,
  rainbow: <I s={24} v={24}><path d="M3 1h8v4H3z" fill="#e23a2a" /><path d="M3 5h8v4H3z" fill="#f59a2a" /><path d="M3 9h8v4H3z" fill="#f2ee3a" /><path d="M3 13h8v4H3z" fill="#3fd05a" /><path d="M3 17h8v6H3z" fill="#2a7ae2" /><path d="m12 6 9 14" stroke="#111" strokeWidth="3" /><path d="m10 2 4 6" stroke="#fff" strokeWidth="3" /></I>,
  process: <I s={24} v={24}><path d="M4 3h5v14H4zM11 8h12l-6 4h-5" fill="#5d8fd0" stroke="#4a74ac" /><path d="M2 6h3M2 10h3M2 14h3M3 19h8M2 22h10" stroke="#335c96" strokeWidth="1.500" /><path d="m12 9 8 11" stroke="#111" strokeWidth="3" /><path d="m10 5 3 5" stroke="#fff" strokeWidth="2" /></I>,
  roles: <I s={24} v={24}><path d="M9 5c2-4 7-4 10-2l3 4-3-1-2 1-3-2-4 3z" fill="#c8cacc" stroke="#444" /><path d="m14 6-5 7" stroke="#444" strokeWidth="1.500" /><path d="m3 15 4-3 5 3v6l-9 1z" fill="#f1c27c" stroke="#555" /><circle cx="7" cy="13" r="2.500" fill="#fff" stroke="#555" /><path d="m12 15 5 2v5h-6z" fill="#9ea6c8" stroke="#444" /></I>,

  max: <I s={17}><path d="M1 1h14v14H1z" stroke="#111" strokeWidth="1.300" /><path d="M1 1h14v2.500H1z" fill="#111" /></I>,
  home: <I s={34} v={32}><path d="m6 12 6-7 7 14v10l-13-4z" fill="#e8edf8" stroke="#a4abc0" strokeWidth=".7" /><path d="m18 18 11-4v11l-11 5z" fill="#f4f6fa" stroke="#aab" strokeWidth=".7" /><path d="M5 1h6v7l-6 6z" fill="#8e2a22" /><path d="m10 3 12 0 10 12-13 4z" fill="#fba81e" stroke="#d88a20" strokeWidth=".7" /><path d="M10.500 4 1 15" stroke="#7b5a42" strokeWidth="1.800" /><path d="M8 18h4v11l-4-2z" fill="#3a4ba8" /><path d="M21 21h4v4h-4z" fill="#a9c8f0" /><path d="M2 27c3-3 5-1 6 1M22 29c3-3 6-2 8-1" stroke="#8ab870" strokeWidth="1.500" /></I>,
  back: <I s={26} v={26}><path d="M2 12 14 2v6h10v10H14v6z" fill="#8ad4e2" stroke="#3d6f84" strokeWidth="1.600" /></I>,
  fwd: <I s={26} v={26}><path d="M24 12 12 2v6H2v10h10v6z" fill="#d4d4d4" stroke="#989898" strokeWidth="1.600" /></I>,
  reload: <I s={32} v={32}><path d="M22.500 4A13 13 0 1 0 26 24" stroke="#2f4a9a" strokeWidth="2.200" /><path d="m31 13-1 11-9-4z" fill="#1f3a8c" /></I>,
  dwg: <I s={17}><path d="M1 11 5 4l2 1-3 6M1 9l12 5h2L6 7" stroke="#5b6b5b" fill="#dfe4d2" /><path d="M7 1h4v3l3 2-2 4-4-3z" stroke="#3d4fa8" fill="#fff" /></I>,
  prt: <I s={16}><path d="m2 5 3-3 3 2v3l2-2 4 1v5l-5 4-7-3z" fill="#2f62c4" stroke="#123a86" strokeWidth=".8" /><path d="m5 2 3 2-2 2-4-1zM10 5l4 1-3 2-3-1z" fill="#a8cdf6" /></I>,
  st: <I s={16}><path d="M.5.5h15v15H.5z" fill="#dcdcd6" stroke="#aaa" /><path d="m3 3 3 4 2-4 3 5 2-4M3 9l4 2 3-3 2 5" stroke="#999" /></I>,
  chevL: <I s={14}><path d="m11 1-6 7 6 7" stroke="#555" strokeWidth="2.500" /></I>,
  chevR: <I s={14}><path d="m5 1 6 7-6 7" stroke="#555" strokeWidth="2.500" /></I>,

  win: <I s={24} v={24}><path d="m0 3.400 10-1.400v9.500H0zM11 1.800 24 0v11.500H11zM0 12.500h10V22L0 20.600zM11 12.500h13V24l-13-1.800z" fill="#fff" /></I>,
  mag: <I s={26} v={26}><circle cx="16" cy="9" r="7.500" stroke="#222" strokeWidth="1.700" /><path d="M10.500 14.500 1 25" stroke="#222" strokeWidth="1.700" /></I>,
  cortana: <I s={26} v={26}><circle cx="13" cy="13" r="10.500" stroke="#fff" strokeWidth="2.700" /></I>,
  taskview: <I s={26} v={26}><path d="M2 7h15v12H2zM2 1v3h15V1M2 25v-3h15v3M23 1v6M23 13v12" stroke="#fff" strokeWidth="1.300" /><path d="M21.500 8.500h3v3h-3z" fill="#fff" /></I>,
  edgeB: <I s={37} v={36}><defs><linearGradient id="eg" x1="0" y1="0" x2="1" y2=".5"><stop stopColor="#2a9fd8" /><stop offset=".6" stopColor="#35c1c9" /><stop offset="1" stopColor="#5fd860" /></linearGradient></defs><path d="M1 16C2 7 9 1 18 1c10 0 17 7 17 15 0 6-4 9-9 9-4 0-6-2-5-4 3-3 1-8-5-8C8 13 2 17 1 24z" fill="url(#eg)" /><path d="M1 17c3-7 10-10 17-7-6 0-10 6-9 12 1 7 7 12 13 12C9 38-1 28 1 17z" fill="#1976d2" /><path d="M18 13c-4 3-3 9 1 12 5 3 10 2 13 0 2-1 2 0 1 1-3 5-9 8-13 8-9-3-10-17-2-21z" fill="#0d4f9e" /></I>,
  explorer: <I s={34} v={34}><path d="M1 4h12l3 3h17v8H1z" fill="#d99a2b" /><path d="M1 10h16l3-2h13v23H1z" fill="#fcd880" /><path d="M6 20c0-2 1-3 3-3h16c2 0 3 1 3 3v11h-5v-6H11v6H6z" fill="#3e90c4" /></I>,
  store: <I s={38} v={36}><path d="M11 10V6c0-7 14-7 14 0v4M14 10V7c0-4 7-4 7 0" stroke="#fff" strokeWidth="1.700" /><path d="M1 10h34v23c0 1-1 2-2 2H3c-1 0-2-1-2-2z" fill="#fff" /><path d="M11 15h6.500v7H11z" fill="#e5502c" /><path d="M19 15h6.500v7H19z" fill="#7db72f" /><path d="M11 23.500h6.500v6.500H11z" fill="#2ba3e0" /><path d="M19 23.500h6.500v6.500H19z" fill="#f9b617" /></I>,
  mail: <I s={38} v={36}><path d="M0 13 18 2l18 11v20H0z" fill="#fff" /><path d="m2 13 32 0-8 7 3 7L15 19z" fill="#1e1e1e" /></I>,
  rar: <I s={32} v={32}><path d="m1 2 4-1h24l2 8H5l-4 1z" fill="#a5488c" /><path d="m1 12 4-1h26v8H5l-4 1z" fill="#3236b8" /><path d="m1 22 4-1h26v8l-4 2H1z" fill="#22782c" /><path d="M2 2v29M5 3v27" stroke="#ccc" strokeWidth="1.500" strokeDasharray="3 2" /><path d="M6 5h24M6 15h24M6 25h24" stroke="#fff" opacity=".3" strokeWidth="1.500" /><path d="M17 1h3v30h-3z" fill="#7a6048" /><path d="M16 11h5v6h-5z" fill="#b9b9b9" /></I>,
  nx: <I s={38} v={38}><circle cx="19" cy="20" r="13" fill="#2aa8dc" /><circle cx="16" cy="17" r="7" fill="#9ef0f0" opacity=".7" /><path d="M18 26c6-4 10-9 12-14l3 4c-1 8-6 15-14 17z" fill="#1a3a94" /><path d="M33 8c9 3-2 22-28 25M33 8c5 5-8 20-26 23" stroke="#f0bc4a" strokeWidth="2" /><path d="M1 33 9 28v8z" fill="#f3ca6a" /><path d="m4 3 15-1-3 16z" fill="#d23a5c" /><path d="m19 2-3 16-2-14z" fill="#f08aa0" /></I>,
  chrome: <I s={36} v={36}><circle cx="18" cy="18" r="17" fill="#3fa652" /><path d="M3.300 9.500A17 17 0 0 1 32.700 9.500H18a8.500 8.500 0 0 0-8 6z" fill="#e2483a" /><path d="M32.700 9.500A17 17 0 0 1 18 35l7.500-13a8.500 8.500 0 0 0-7.500-12.500z" fill="#f8cb38" /><circle cx="18" cy="18" r="8.500" fill="#fff" /><circle cx="18" cy="18" r="6.700" fill="#4183e8" /></I>,
  weather: <I s={34} v={34}><circle cx="16" cy="13" r="12" fill="#f7a81e" /><circle cx="17" cy="15" r="9" fill="#fbc65a" /><path d="M8 32a7 7 0 0 1-1-14c2-7 14-9 17 0 11-1 11 14 2 14z" fill="#dfe8f5" /></I>,
  chevU: <I s={20} v={20}><path d="m1 14 9-9 9 9" stroke="#fff" strokeWidth="1.500" /></I>,
  cam: <I s={22} v={22}><path d="M5 2c4-2 7-2 11 0M5 20c4 2 7 2 11 0M4 6h9v10H4zM14 11l4-3v7z" stroke="#fff" strokeWidth="1.300" /></I>,
  batt: <I s={26} v={24}><path d="M7 6h14v11H5v-5" stroke="#fff" strokeWidth="1.500" /><path d="M8 8h12v8H7v-4z" fill="#fff" /><path d="M22 9h2v5h-2zM1 2v4c0 3 5 3 5 0V2M0 3h7M3.500 8v5" stroke="#fff" strokeWidth="1.300" /></I>,
  wifi: <I s={22} v={22}><path d="M2 20C2 9 9 2 20 2M6 20C6 12 12 6 20 6M10.500 20c0-5 4-9 9.500-9.500" stroke="#ddd" strokeWidth="1.300" /><path d="M15 20c0-3 2-5 5-5" stroke="#ddd" strokeWidth="1.300" />{dot(18.5, 18.5, 1.8, "#fff")}</I>,
  sound: <I s={24} v={24}><path d="M1 8h4l5-6v19l-5-5H1zM13 8c2 2 2 5 0 7M16 6c3 3 3 8 0 11M19 3c5 5 5 12 0 17" stroke="#fff" strokeWidth="1.400" /></I>,
  note: <I s={26} v={26}><path d="M1 2h24v19h-8l-4 4-4-4H1z" stroke="#fff" strokeWidth="1.500" /></I>,
};

/* ---------- parts ---------- */
const B = ({ i, label, w, hot, drop }: { i: string; label: string; w?: number; hot?: boolean; drop?: number }) => (
  <>
    <Cell type="button" aria-label={label} $w={w} $hot={hot}>{ic[i]}</Cell>
    {drop && <Cell type="button" aria-label={`${label} options`} $w={drop}><Down /></Cell>}
  </>
);

const Big = ({ i, w, lines, arrow, box, drop, off }: { i: string; w: number; lines: string[]; arrow?: boolean; box?: boolean; drop?: number; off?: boolean }) => (
  <BigBtn type="button" $w={w} $drop={box ? -1 : drop} $off={off} disabled={off}>
    <BigIcon $box={box}>{ic[i]}</BigIcon>
    {lines.map((l, n) => (
      <BigLine key={l}>{l}{arrow && n === 1 && <Down />}</BigLine>
    ))}
    {arrow && lines.length === 1 && <ArrowLine><Down /></ArrowLine>}
  </BigBtn>
);

const Small = ({ i, children, arrow }: { i: string; children: string; arrow?: boolean }) => (
  <SmallBtn type="button">{ic[i]}{children}{arrow && <>&nbsp;<Down /></>}</SmallBtn>
);

const Group = ({ w, name, pad, children }: { w: number; name?: string; pad?: number; children: React.ReactNode }) => (
  <GroupBox $w={w}>
    <GroupBody $pad={pad}>{children}</GroupBody>
    {name && (
      <GroupFoot>
        <h2>{name}</h2>
        <Cell type="button" aria-label={`${name} options`} $w={28}><Down /></Cell>
      </GroupFoot>
    )}
  </GroupBox>
);

const BarEnd = styled.div`
  align-self: flex-end;
`;

const Star = ({ x, y, c }: { x: number; y: number; c: string }) => (
  <path d={`M${x - 7} ${y}h14M${x} ${y - 7}v14`} stroke={c} strokeWidth="2" />
);

const Model = () => (
  <svg viewBox="462 258 1458 735" preserveAspectRatio="xMidYMid meet" role="img" aria-label="Chamfered block">
    <g stroke="#2c3638" strokeWidth="1.200" strokeLinejoin="round">
      <path d="M855 511 909 499Q935 495 982 509Q1075 536 1268 613L1225 623 1017 572z" fill="#afc5ca" />
      <path d="M855 511 1017 572 1144 745 1089 913 763 793z" fill="#93a4a7" />
      <path d="M1268 613 1177 895 1089 913 1144 745 1225 623z" fill="#6d7a7d" />
      <path d="M1017 572 1225 623 1144 745z" fill="#d7eff4" />
    </g>
    <Star x={1017} y={572} c="#2c5cb8" /><Star x={1225} y={623} c="#2c5cb8" /><Star x={1144} y={745} c="#2c5cb8" />
    <g stroke="#8c4a56" fill="none">
      <path d="M1089 913 1117 828M1089 913 1010 884M1052 899l11-39 39 14" />
      <path d="m1107 852 3-12 4 12zM1020 887l9 5v-6zM1108 912l6-4 0 5z" fill="#8c4a56" />
      <path d="M1113 826h5l-4 7M1005 882l8 3M1008 879l-3 10M1110 906l8 8M1118 904l-7 10" />
      <path d="M1083 914h13M1089 907v13" stroke="#b03844" strokeWidth="1.800" />
    </g>
    <path d="M1053 900 1062 897 1096 909" stroke="#dfe3e5" strokeWidth="1.500" fill="none" />
    <g strokeLinejoin="round">
      <path d="M501 921 510 899 537 905 528 931z" fill="#d7d8da" stroke="#b8babc" />
      <path d="M501 921 510 899 515 902 508 923z" fill="#e1e2e3" stroke="#b8babc" />
      <path d="M523 926 532 900" stroke="#1f3fa8" strokeWidth="4" />
      <path d="m529 901 5-8 2 10z" fill="#1f3fa8" />
      <path d="M522 929 494 919" stroke="#2f7a34" strokeWidth="3" />
      <path d="m486 917 12-1-3 8z" fill="#2f7a34" />
      <path d="M522 930 533 928" stroke="#8c3a3a" strokeWidth="2.500" />
      <circle cx="522" cy="930" r="4" fill="#b5afaf" />
    </g>
    <g fontFamily="Liberation Sans, sans-serif" fontSize="12">
      <text x="532" y="892" fill="#1f3fa8">Z</text>
      <text x="477" y="918" fill="#4a5a4a">Y</text>
      <text x="531" y="932" fill="#b02a2a">X</text>
    </g>
  </svg>
);

export default function App() {
  const url = useRef<HTMLInputElement>(null);
  useEffect(() => {
    if (url.current) url.current.scrollLeft = url.current.scrollWidth;
  }, []);

  return (
    <>
      <Global />
      <Shell>
        <TitleBar>
          <Brand>NX</Brand>
          <Quick><B i="save" label="Save" /></Quick>
          <Quick $pad={1}><B i="undo" label="Undo" /><Cell type="button" aria-label="Undo list" $w={18}><Down c="#bbb" /></Cell><B i="redo" label="Redo" /></Quick>
          <Quick $pad={2}><B i="cut" label="Cut" /><B i="copy" label="Copy" /><B i="paste" label="Paste" /><B i="target" label="Command finder" /></Quick>
          <Quick $pad={2}><B i="page" label="New" drop={18} /></Quick>
          <Quick $pad={3}><B i="eraser" label="Erase" /></Quick>
          <Quick $pad={0}>
            <QuickText type="button">{ic.switch}Switch Window</QuickText>
            <QuickText type="button">{ic.window}Window<Down /></QuickText>
            <Cell type="button" aria-label="Toolbar options" $w={24}><More /></Cell>
          </Quick>
          <Title>NX 12 - Modeling</Title>
          <Siemens>SIEMENS</Siemens>
          <Cell type="button" aria-label="Minimize" $w={35}>{ic.min}</Cell>
          <Cell type="button" aria-label="Restore" $w={35}>{ic.restore}</Cell>
          <Cell type="button" aria-label="Close" $w={36}>{ic.close}</Cell>
        </TitleBar>

        <TabBar>
          <Tab type="button" $kind="file">File</Tab>
          <Tab type="button" $kind="on">Home</Tab>
          {["Assemblies", "Curve", "Analysis", "View", "Render", "Tools", "Application"].map((t) => (
            <Tab type="button" key={t}>{t}</Tab>
          ))}
          <Spacer />
          <Finder><input aria-label="Find a Command" placeholder="Find a Command" />{ic.find}</Finder>
          <TabTools>
            <Cell type="button" aria-label="Full screen" $w={26}>{ic.full}</Cell>
            <Cell type="button" aria-label="Minimize ribbon" $w={26}>{ic.up}</Cell>
            <Cell type="button" aria-label="Help" $w={26}>{ic.help}</Cell>
          </TabTools>
        </TabBar>

        <Ribbon>
          <Group w={235} name="Direct Sketch" pad={0}>
            <Big i="sketch" w={75} lines={["Sketch"]} />
            <Gallery>
              {["profile", "rect", "line", "arc", "circle", "plus"].map((g) => (
                <GalleryCell type="button" key={g} aria-label={g}>{ic[g]}</GalleryCell>
              ))}
            </Gallery>
            <GalleryNav>
              <GalleryCell type="button" aria-label="Scroll up"><I s={7} v={8}><path d="M0 6h8L4 1z" fill="#9a9a9a" /></I></GalleryCell>
              <GalleryCell type="button" aria-label="Scroll down"><Down /></GalleryCell>
              <GalleryCell type="button" aria-label="Show all"><More /></GalleryCell>
            </GalleryNav>
          </Group>
          <Group w={558} name="Feature">
            <Big i="datum" w={74} lines={["Datum", "Plane"]} arrow />
            <Big i="extrude" w={57} lines={["Extrude"]} arrow />
            <Big i="hole" w={50} lines={["Hole"]} />
            <SmallCol $w={148}><Small i="pattern">Pattern Feature</Small><Small i="unite" arrow>Unite</Small><Small i="shell">Shell</Small></SmallCol>
            <Big i="edge" w={62} lines={["Edge", "Blend"]} arrow />
            <SmallCol $w={113}><Small i="chamfer">Chamfer</Small><Small i="trim">Trim Body</Small><Small i="draft">Draft</Small></SmallCol>
            <Big i="moreF" w={46} lines={["More"]} arrow box />
          </Group>
          <Group w={248} name="Synchronous Modeling" pad={5}>
            <Big i="moveFace" w={55} lines={["Move", "Face"]} />
            <SmallCol $w={137}><Small i="offset">Offset Region</Small><Small i="replace">Replace Face</Small><Small i="del">Delete Face</Small></SmallCol>
            <Big i="moreS" w={46} lines={["More"]} arrow box />
          </Group>
          <Group w={67} pad={0}>
            <Big i="surface" w={66} lines={["Surface"]} arrow drop={9} />
          </Group>
          <Group w={326} name="Assemblies">
            <Big i="work" w={87} lines={["Work on", "Assembly"]} off />
            <Big i="add" w={36} lines={["Add"]} arrow />
            <SmallCol $w={190}><Small i="constr">Assembly Constraints</Small><Small i="moveC">Move Component</Small><Small i="patC">Pattern Component</Small></SmallCol>
          </Group>
          <RibbonEnd><Cell type="button" aria-label="Ribbon options"><Down /></Cell></RibbonEnd>
        </Ribbon>

        <SelBar>
          <MenuBtn type="button">{ic.menu}<span><u>M</u>enu</span><Down /></MenuBtn>
          <Combo $w={192} $gap={12}>
            <select aria-label="Selection filter"><option>No Selection Filter</option></select><Down w={11} />
          </Combo>
          <Combo $w={202} $gap={9}>
            <select aria-label="Selection scope"><option>Entire Assembly</option></select><Down w={11} />
          </Combo>
          <Tools $gap={4}>
            <B i="g1" w={24} label="Reset filters" /><B i="g2" w={24} label="Detail filtering" /><B i="filt" w={24} label="Color filter" drop={16} />
            <B i="g3" w={24} label="Selection up" /><B i="g4" w={24} label="Selection back" /><B i="dotcube" w={24} label="Select hidden" /><B i="marquee" w={24} label="Rectangle" drop={16} />
          </Tools>
          <Tools $gap={3} $bar>
            <B i="meshcube" w={25} label="Highlight" /><B i="solid" w={25} label="Solid" />
            <B i="snap" w={25} hot label="Snap point" /><B i="end" w={25} hot label="End point" /><B i="mid" w={25} hot label="Mid point" />
            <B i="curve" w={25} label="Control point" /><B i="pole" w={25} hot label="Pole" /><B i="spline" w={25} hot label="Defining point" />
            <B i="inter" w={25} label="Intersection" /><B i="center" w={25} hot label="Arc center" /><B i="quad" w={25} label="Quadrant" />
            <B i="cross" w={25} hot label="Existing point" /><B i="onCurve" w={25} hot label="Point on curve" /><B i="face" w={25} label="Point on face" />
            <B i="grid1" w={25} label="Facet vertex" /><B i="grid2" w={25} label="Grid point" /><Cell as="span" $w={4} />
          </Tools>
          <Tools $gap={8} $bar>
            <B i="fit" w={25} label="Fit" /><B i="zoomw" w={25} label="Zoom" /><B i="rotate" w={25} label="Rotate" /><B i="paint" w={25} label="Edit display" />
            <B i="pages" w={25} label="Copy view" /><B i="layout" w={25} label="Layout" drop={16} /><B i="shade" w={25} label="Rendering style" drop={17} />
            <B i="bluecube" w={25} label="Orient view" drop={16} /><B i="clip" w={25} label="Clip section" drop={16} />
          </Tools>
          <Spacer />
          <BarEnd><Cell type="button" aria-label="Bar options"><Down /></Cell></BarEnd>
        </SelBar>

        <Body>
          <Rail>
            <RailBtn $h={26} type="button" aria-label="Settings">{ic.gear}</RailBtn>
            <RailBtn $gap={16} type="button" aria-label="Assembly Navigator">{ic.asmNav}</RailBtn>
            <RailBtn type="button" aria-label="Constraint Navigator">{ic.conNav}</RailBtn>
            <RailBtn type="button" aria-label="Part Navigator">{ic.partNav}</RailBtn>
            <RailBtn type="button" aria-label="Reuse Library">{ic.books}</RailBtn>
            <RailBtn $gap={12} type="button" aria-label="HD3D Tools">{ic.info}</RailBtn>
            <RailBtn $h={45} $gap={10} $on type="button" aria-label="Web Browser">{ic.web}</RailBtn>
            <RailBtn $gap={11} type="button" aria-label="History">{ic.history}</RailBtn>
            <RailBtn type="button" aria-label="System Materials">{ic.rainbow}</RailBtn>
            <RailBtn type="button" aria-label="Process Studio">{ic.process}</RailBtn>
            <RailBtn type="button" aria-label="Roles">{ic.roles}</RailBtn>
          </Rail>
          <Panel>
            <PanelHead><h2>Web Browser</h2><Cell type="button" aria-label="Maximize" $w={18}>{ic.max}</Cell></PanelHead>
            <NavRow>
              <Cell type="button" aria-label="Home page" $w={48}>{ic.home}</Cell>
              <Cell type="button" aria-label="Back" $w={48}>{ic.back}</Cell>
              <Cell type="button" aria-label="Forward" $w={46}>{ic.fwd}</Cell>
              <Cell type="button" aria-label="Refresh" $w={46}>{ic.reload}</Cell>
              <Url ref={url} aria-label="Address" defaultValue="um/ct-p/NXforDesign" />
              <LinkBtn type="button">Tools<Down w={9} /></LinkBtn>
            </NavRow>
            <Web><p>AccessDeniedAccess</p><p>Denied5C34NSH4X87E5B7BJVhri8Udfutt</p></Web>
            <Scroll>
              <Cell type="button" aria-label="Scroll left" $w={26}>{ic.chevL}</Cell>
              <Thumb />
              <Spacer />
              <Cell type="button" aria-label="Scroll right" $w={26}>{ic.chevR}</Cell>
            </Scroll>
          </Panel>
          <Stage>
            <FileTabs>
              <FileTab type="button">{ic.dwg}dwg1.prt</FileTab>
              <FileTab type="button" $on>{ic.prt}1.prt<I s={9} v={10}><path d="m1 1 8 8m0-8-8 8" stroke="#fff" strokeWidth="2.500" /></I></FileTab>
            </FileTabs>
            <Canvas>
              <Model />
              <Watermark>莫西网<span>www.3dmox.com</span></Watermark>
            </Canvas>
          </Stage>
        </Body>
        <Status>{ic.st}{ic.full}</Status>

        <TaskBar>
          <TaskBtn type="button" $w={72} aria-label="Start">{ic.win}</TaskBtn>
          <SearchBox>{ic.mag}<input aria-label="Search" placeholder="Type here to search" /></SearchBox>
          <TaskBtn type="button" $w={72} aria-label="Cortana">{ic.cortana}</TaskBtn>
          <TaskBtn type="button" aria-label="Task View">{ic.taskview}</TaskBtn>
          <TaskBtn type="button" aria-label="Edge">{ic.edgeB}</TaskBtn>
          <TaskBtn type="button" aria-label="File Explorer"><Running>{ic.explorer}</Running></TaskBtn>
          <TaskBtn type="button" aria-label="Store">{ic.store}</TaskBtn>
          <TaskBtn type="button" aria-label="Mail">{ic.mail}</TaskBtn>
          <TaskBtn type="button" aria-label="WinRAR">{ic.rar}</TaskBtn>
          <TaskBtn type="button" $on aria-label="NX"><Running $wide>{ic.nx}</Running></TaskBtn>
          <TaskBtn type="button" aria-label="Chrome"><Running>{ic.chrome}</Running></TaskBtn>
          <Tray>
            <Lang type="button">EN</Lang>
            <Weather type="button">{ic.weather}26°C</Weather>
            <TrayBtn type="button" $w={36} aria-label="Hidden icons">{ic.chevU}</TrayBtn>
            <TrayBtn type="button" $w={36} aria-label="Camera">{ic.cam}</TrayBtn>
            <TrayBtn type="button" $w={36} aria-label="Battery">{ic.batt}</TrayBtn>
            <TrayBtn type="button" $w={36} aria-label="Network">{ic.wifi}</TrayBtn>
            <TrayBtn type="button" $w={36} aria-label="Volume">{ic.sound}</TrayBtn>
            <Clock type="button"><span>14:37</span><span>18-09-2022</span></Clock>
            <TrayBtn type="button" $w={62} aria-label="Notifications">{ic.note}</TrayBtn>
            <Peek />
          </Tray>
        </TaskBar>
      </Shell>
    </>
  );
}
